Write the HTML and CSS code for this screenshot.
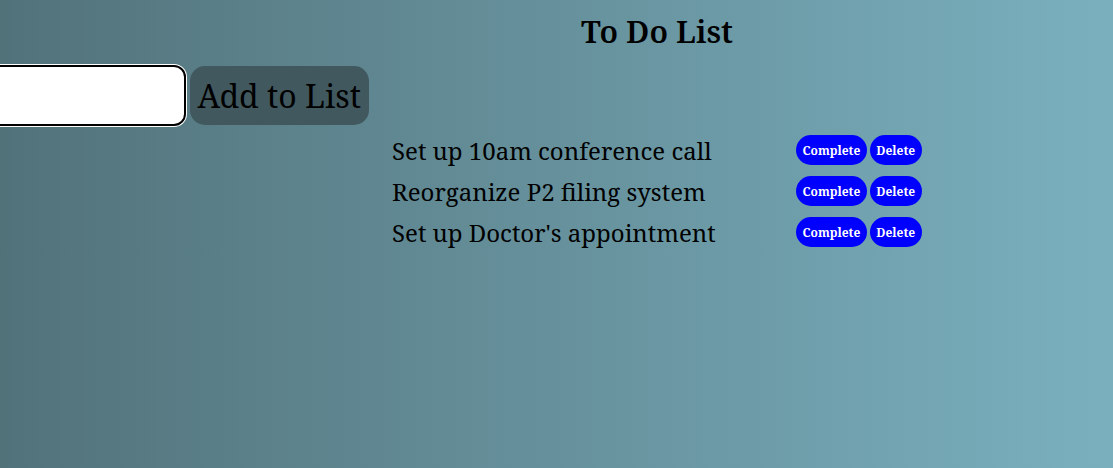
FILE: index.html
```html
<!DOCTYPE html>
<html>
<head>
<meta charset="utf-8">
<title>To Do List</title>
<link rel="stylesheet" href="styles.css">
</head>
<body>
<div class="page">
  <h1 class="title">To Do List</h1>
  <form class="add-form">
    <input class="add-input" type="text">
    <button class="add-btn" type="button">Add to List</button>
  </form>
  <ul class="todo-list">
    <li class="todo-item"><span class="todo-text">Set up 10am conference call</span><span class="actions"><button class="pill" type="button">Complete</button><button class="pill" type="button">Delete</button></span></li>
    <li class="todo-item"><span class="todo-text">Reorganize P2 filing system</span><span class="actions"><button class="pill" type="button">Complete</button><button class="pill" type="button">Delete</button></span></li>
    <li class="todo-item"><span class="todo-text">Set up Doctor's appointment</span><span class="actions"><button class="pill" type="button">Complete</button><button class="pill" type="button">Delete</button></span></li>
  </ul>
</div>
</body>
</html>
```
FILE: styles.css
```css
html, body {
  margin: 0;
  height: 100%;
}
body {
  background: linear-gradient(to right, #52727a, #7ab0be);
  font-family: "Noto Serif", "DejaVu Serif", serif;
  color: #000;
  overflow: hidden;
}
.page {
  display: grid;
  grid-template-columns: 369px 23px 530px;
  grid-template-rows: auto auto auto;
}
.title {
  grid-column: 3;
  grid-row: 1;
  margin: 9px 0 0 0;
  height: 56px;
  text-align: center;
  font-size: 31px;
  font-weight: 600;
  line-height: 44px;
}
.add-form {
  grid-column: 1;
  grid-row: 2;
  display: flex;
  justify-content: flex-end;
  align-items: center;
  gap: 4px;
  margin: 0;
}
.add-input {
  flex: none;
  width: 300px;
  height: 61px;
  box-sizing: border-box;
  border: 2px solid #000;
  border-radius: 12px;
  background: #fff;
  box-shadow: 0 0 0 1px #fff;
  outline: none;
}
.add-btn {
  flex: none;
  height: 59px;
  padding: 0 8px;
  border: none;
  border-radius: 15px;
  background: #41585f;
  color: #000;
  font-family: "Noto Serif", "DejaVu Serif", serif;
  font-size: 32px;
}
.todo-list {
  grid-column: 3;
  grid-row: 3;
  list-style: none;
  margin: 9px 0 0 0;
  padding: 0;
  display: flex;
  flex-direction: column;
  gap: 11px;
}
.todo-item {
  display: flex;
  align-items: center;
  height: 30px;
}
.todo-text {
  width: 404px;
  font-size: 24px;
}
.actions {
  display: flex;
  gap: 3px;
}
.pill {
  height: 30px;
  padding: 0 6.5px;
  border: none;
  border-radius: 15px;
  background: #0000ff;
  color: #fff;
  font-family: "Noto Serif", "DejaVu Serif", serif;
  font-weight: bold;
  font-size: 12px;
}
```
